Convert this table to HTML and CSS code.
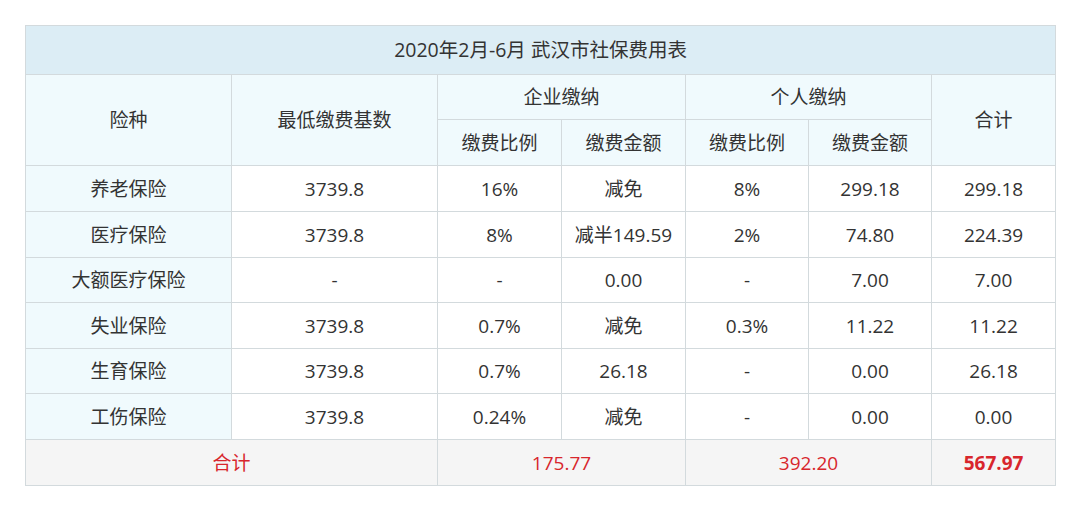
FILE: index.html
```html
<!DOCTYPE html>
<html lang="zh">
<head>
<meta charset="utf-8">
<link rel="stylesheet" href="styles.css">
</head>
<body>
<table class="fee">
  <colgroup>
    <col class="c1"><col class="c2"><col class="c3"><col class="c4"><col class="c5"><col class="c6"><col class="c7">
  </colgroup>
  <tr class="r-title"><td colspan="7" class="title">2020年2月-6月 武汉市社保费用表</td></tr>
  <tr class="r-h1">
    <td rowspan="2" class="head">险种</td>
    <td rowspan="2" class="head">最低缴费基数</td>
    <td colspan="2" class="head">企业缴纳</td>
    <td colspan="2" class="head">个人缴纳</td>
    <td rowspan="2" class="head">合计</td>
  </tr>
  <tr class="r-h2">
    <td class="head">缴费比例</td><td class="head">缴费金额</td>
    <td class="head">缴费比例</td><td class="head">缴费金额</td>
  </tr>
  <tr class="r46"><td class="name">养老保险</td><td>3739.8</td><td>16%</td><td>减免</td><td>8%</td><td>299.18</td><td>299.18</td></tr>
  <tr class="r46"><td class="name">医疗保险</td><td>3739.8</td><td>8%</td><td>减半149.59</td><td>2%</td><td>74.80</td><td>224.39</td></tr>
  <tr class="r45"><td class="name">大额医疗保险</td><td>-</td><td>-</td><td>0.00</td><td>-</td><td>7.00</td><td>7.00</td></tr>
  <tr class="r46"><td class="name">失业保险</td><td>3739.8</td><td>0.7%</td><td>减免</td><td>0.3%</td><td>11.22</td><td>11.22</td></tr>
  <tr class="r45"><td class="name">生育保险</td><td>3739.8</td><td>0.7%</td><td>26.18</td><td>-</td><td>0.00</td><td>26.18</td></tr>
  <tr class="r46"><td class="name">工伤保险</td><td>3739.8</td><td>0.24%</td><td>减免</td><td>-</td><td>0.00</td><td>0.00</td></tr>
  <tr class="r46 total"><td colspan="2">合计</td><td colspan="2">175.77</td><td colspan="2">392.20</td><td class="grand">567.97</td></tr>
</table>
</body>
</html>
```
FILE: styles.css
```css
html, body {
  margin: 0;
  padding: 0;
  background: #ffffff;
}
body {
  padding: 25px 25px 0 25px;
  font-family: "Open Sans", "Noto Sans CJK SC", sans-serif;
  color: #333333;
}
.fee {
  border-collapse: collapse;
  table-layout: fixed;
  width: 1031px;
  font-size: 19px;
}
.c1, .c2 { width: 206px; }
.c3, .c4 { width: 124px; }
.c5, .c6 { width: 123px; }
.c7 { width: 124px; }
.fee td {
  border: 1px solid #d3dadd;
  text-align: center;
  vertical-align: middle;
  padding: 0;
  line-height: 22px;
  background: #ffffff;
}
.r-title { height: 49px; }
.r-h1 { height: 45px; }
.r-h2 { height: 46px; }
.r46 { height: 46px; }
.r45 { height: 45px; }
.fee td.title {
  background: #dcedf5;
  font-size: 19.5px;
}
.fee td.head, .fee td.name {
  background: #f0fafd;
}
.total td {
  background: #f5f5f5;
  color: #d8262c;
}
.total td.grand {
  font-weight: 700;
}
```
